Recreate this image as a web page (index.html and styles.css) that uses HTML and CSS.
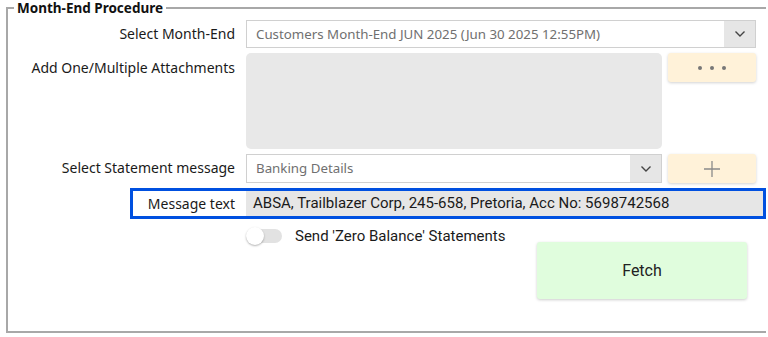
FILE: index.html
```html
<!DOCTYPE html>
<html lang="en">
<head>
  <meta charset="UTF-8">
  <title>Month-End Procedure</title>
  <link rel="stylesheet" href="styles.css">
</head>
<body>

  <fieldset class="panel">
    <legend>Month-End Procedure</legend>

    <div class="row row-month">
      <label class="lbl">Select Month-End</label>
      <div class="combo combo-wide">
        <span class="combo-text">Customers Month-End JUN 2025 (Jun 30 2025 12:55PM)</span>
        <span class="combo-btn">
          <svg width="12" height="8" viewBox="0 0 12 8"><path d="M1.5 1.5 L6 6 L10.5 1.5" fill="none" stroke="#444" stroke-width="1.4"/></svg>
        </span>
      </div>
    </div>

    <div class="row row-attach">
      <label class="lbl">Add One/Multiple Attachments</label>
      <div class="attach-box"></div>
      <button class="btn-cream btn-dots">
        <span class="dot"></span><span class="dot"></span><span class="dot"></span>
      </button>
    </div>

    <div class="row row-msg">
      <label class="lbl">Select Statement message</label>
      <div class="combo combo-narrow">
        <span class="combo-text">Banking Details</span>
        <span class="combo-btn">
          <svg width="12" height="8" viewBox="0 0 12 8"><path d="M1.5 1.5 L6 6 L10.5 1.5" fill="none" stroke="#444" stroke-width="1.4"/></svg>
        </span>
      </div>
      <button class="btn-cream btn-plus">
        <svg width="16" height="16" viewBox="0 0 16 16"><path d="M8 0 V16 M0 8 H16" stroke="#8a8a8a" stroke-width="1.3"/></svg>
      </button>
    </div>

    <div class="row row-text">
      <label class="lbl">Message text</label>
      <div class="msg-field">ABSA, Trailblazer Corp, 245-658, Pretoria, Acc No: 5698742568</div>
    </div>

    <div class="row row-toggle">
      <span class="toggle"><span class="knob"></span></span>
      <span class="toggle-label">Send 'Zero Balance' Statements</span>
    </div>

    <div class="row row-fetch">
      <button class="btn-fetch">Fetch</button>
    </div>
  </fieldset>

</body>
</html>
```

FILE: styles.css
```css
body {
  margin: 0;
  background: #fff;
  font-family: "Noto Sans", "Open Sans", sans-serif;
  color: #1a1a1a;
}
.panel {
  margin: 1px 0 0 6px;
  padding: 0;
  width: 757px;
  height: 332px;
  box-sizing: border-box;
  border: 2px solid #a8a8a8;
  border-right: none;
  position: relative;
}
.panel legend {
  margin-left: 6px;
  padding: 0 3px;
  font-size: 13.5px;
  font-weight: bold;
  line-height: 14px;
  color: #111;
}
.row {
  display: flex;
  align-items: flex-start;
}
.lbl {
  width: 227px;
  padding-right: 11px;
  text-align: right;
  font-size: 14px;
  line-height: 19px;
  color: #1a1a1a;
  flex-shrink: 0;
}
.row-month { margin-top: 5px; }
.row-month .lbl,
.row-msg .lbl { padding-top: 4px; }

.combo {
  display: flex;
  height: 28px;
  box-sizing: border-box;
  border: 1px solid #d0d0d0;
  background: #fff;
}
.combo-wide { width: 510px; }
.combo-narrow { width: 416px; height: 29px; }
.combo-text {
  flex: 1;
  padding-left: 9px;
  font-size: 13.3px;
  line-height: 26px;
  color: #707070;
}
.combo-btn {
  width: 31px;
  background: #e6e6e6;
  display: flex;
  align-items: center;
  justify-content: center;
}

.row-attach { margin-top: 5px; }
.row-attach .lbl { padding-top: 5px; }
.attach-box {
  width: 416px;
  height: 96px;
  background: #e8e8e8;
  border-radius: 5px;
}
.btn-cream {
  margin-left: 6px;
  width: 88px;
  height: 29px;
  border: none;
  border-radius: 3px;
  background: #fff2d9;
  box-shadow: 0 1px 3px rgba(0,0,0,0.18);
  display: flex;
  align-items: center;
  justify-content: center;
  padding: 0;
}
.btn-dots { gap: 8px; }
.dot {
  width: 4px;
  height: 4px;
  border-radius: 50%;
  background: #777;
}

.row-msg { margin-top: 5px; }

.row-text {
  margin-top: 5px;
  margin-left: 122px;
  width: 636px;
  box-sizing: border-box;
  border: 3px solid #0050e0;
  align-items: stretch;
}
.row-text .lbl {
  width: 102px;
  padding-top: 3px;
}
.msg-field {
  flex: 1;
  height: 25px;
  padding-left: 7px;
  background: #e6e6e6;
  font-family: Roboto, "Liberation Sans", sans-serif;
  font-size: 15px;
  line-height: 25px;
  color: #1a1a1a;
}

.row-toggle {
  margin-top: 8px;
  margin-left: 238px;
  align-items: center;
}
.toggle {
  position: relative;
  width: 36px;
  height: 14px;
  border-radius: 7px;
  background: #e2e2e2;
}
.knob {
  position: absolute;
  left: 0;
  top: -2px;
  width: 18px;
  height: 18px;
  border-radius: 50%;
  background: #fff;
  box-shadow: 0 1px 2px rgba(0,0,0,0.3);
}
.toggle-label {
  margin-left: 13px;
  font-family: Roboto, "Liberation Sans", sans-serif;
  font-size: 15px;
  color: #1a1a1a;
}

.row-fetch {
  margin-top: -3px;
  margin-left: 529px;
}
.btn-fetch {
  width: 210px;
  height: 57px;
  border: none;
  border-radius: 3px;
  background: #e0fddd;
  box-shadow: 0 1px 3px rgba(0,0,0,0.2);
  font-family: Roboto, "Liberation Sans", sans-serif;
  font-size: 16px;
  color: #222;
}
```
